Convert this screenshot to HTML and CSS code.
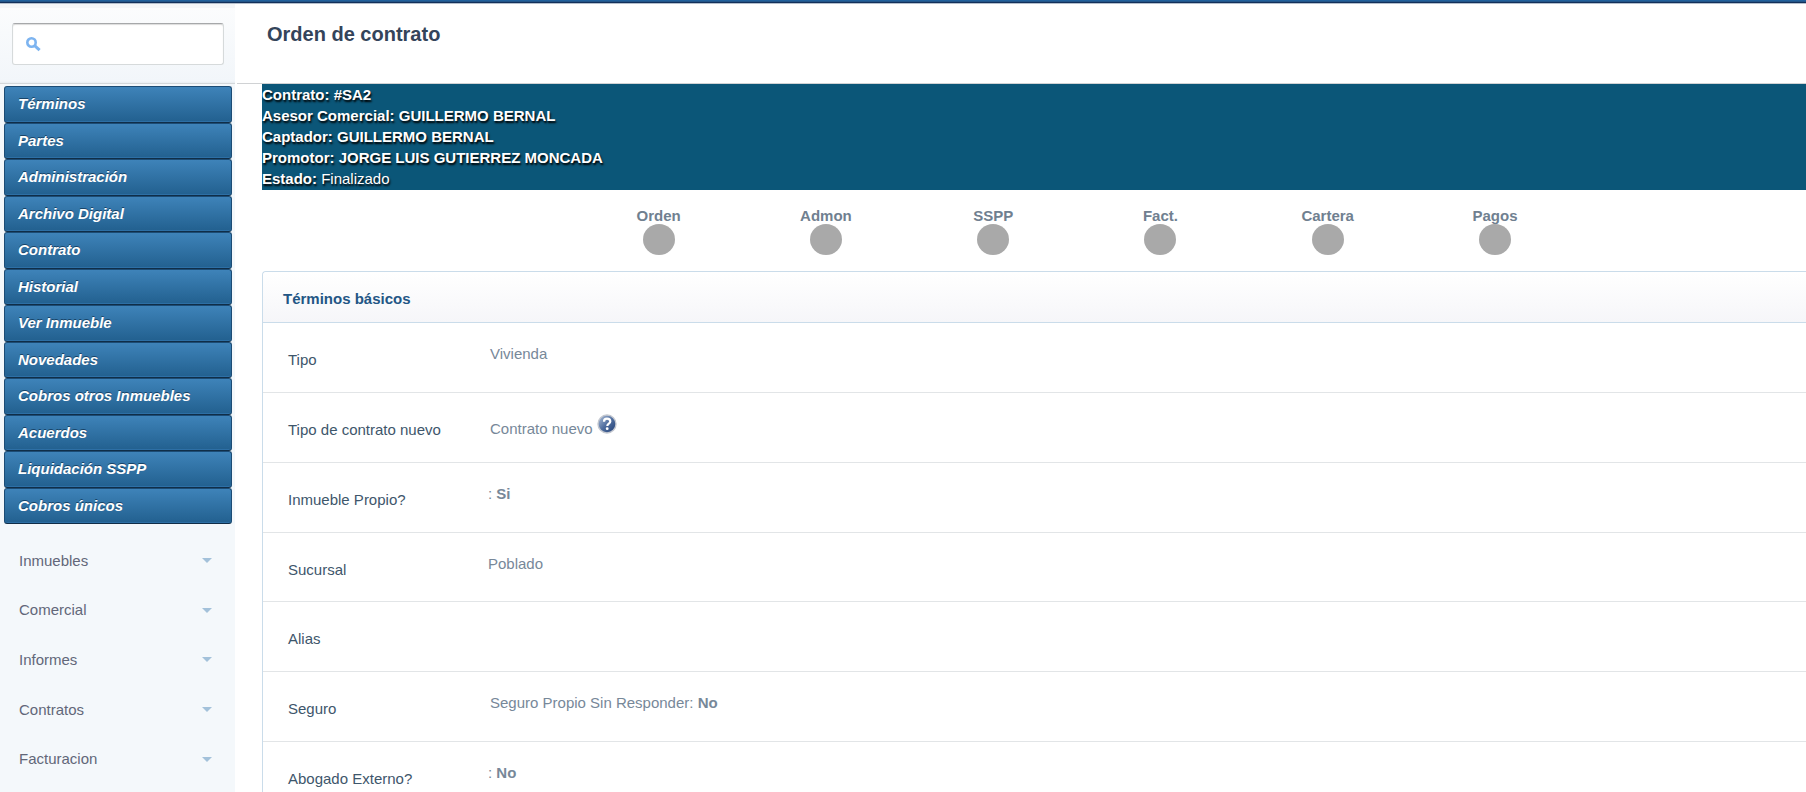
FILE: index.html
```html
<!DOCTYPE html>
<html lang="es">
<head>
<meta charset="utf-8">
<meta name="viewport" content="width=device-width, initial-scale=1">
<title>Orden de contrato</title>
<link rel="stylesheet" href="styles.css">
</head>
<body>
<div class="topbar"></div>
<div class="layout">
  <aside class="sidebar">
    <form class="search" role="search">
      <label class="search-box">
        <svg class="search-icon" viewBox="0 0 16 16" aria-hidden="true"><circle cx="6.5" cy="6.5" r="4.2" fill="none" stroke="#7db4f0" stroke-width="2.6"/><path d="M9.6 9.6l5 4.6" stroke="#7db4f0" stroke-width="3"/></svg>
        <input class="search-input" type="text" aria-label="Buscar">
      </label>
    </form>
    <nav class="tabs" aria-label="Contrato">
      <a class="tab" href="#">Términos</a>
      <a class="tab" href="#">Partes</a>
      <a class="tab" href="#">Administración</a>
      <a class="tab" href="#">Archivo Digital</a>
      <a class="tab" href="#">Contrato</a>
      <a class="tab" href="#">Historial</a>
      <a class="tab" href="#">Ver Inmueble</a>
      <a class="tab" href="#">Novedades</a>
      <a class="tab" href="#">Cobros otros Inmuebles</a>
      <a class="tab" href="#">Acuerdos</a>
      <a class="tab" href="#">Liquidación SSPP</a>
      <a class="tab" href="#">Cobros únicos</a>
    </nav>
    <nav class="menu" aria-label="Principal">
      <a class="menu-item" href="#">Inmuebles<span class="caret"></span></a>
      <a class="menu-item" href="#">Comercial<span class="caret"></span></a>
      <a class="menu-item" href="#">Informes<span class="caret"></span></a>
      <a class="menu-item" href="#">Contratos<span class="caret"></span></a>
      <a class="menu-item" href="#">Facturacion<span class="caret"></span></a>
    </nav>
  </aside>
  <main class="main">
    <header class="page-header"><h1 class="page-title">Orden de contrato</h1></header>
    <div class="content">
      <section class="banner">
        <div><b>Contrato: #SA2</b></div>
        <div><b>Asesor Comercial: GUILLERMO BERNAL</b></div>
        <div><b>Captador: GUILLERMO BERNAL</b></div>
        <div><b>Promotor: JORGE LUIS GUTIERREZ MONCADA</b></div>
        <div><b>Estado:</b> Finalizado</div>
      </section>
      <div class="steps">
        <div class="step">Orden<span class="dot"></span></div>
        <div class="step">Admon<span class="dot"></span></div>
        <div class="step">SSPP<span class="dot"></span></div>
        <div class="step">Fact.<span class="dot"></span></div>
        <div class="step">Cartera<span class="dot"></span></div>
        <div class="step">Pagos<span class="dot"></span></div>
      </div>
      <section class="panel">
        <h2 class="panel-title">Términos básicos</h2>
        <dl class="fields">
          <div class="field"><dt>Tipo</dt><dd class="inset">Vivienda</dd></div>
          <div class="field"><dt>Tipo de contrato nuevo</dt><dd class="inset">Contrato nuevo
            <svg class="help" viewBox="0 0 20 20" role="img" aria-label="Ayuda"><defs><linearGradient id="ball" x1="0" y1="0" x2="1" y2="1"><stop offset="0" stop-color="#b4c4dc"/><stop offset=".5" stop-color="#506e9f"/><stop offset="1" stop-color="#203e74"/></linearGradient></defs><circle cx="10" cy="10" r="9" fill="url(#ball)" stroke="#c3c7cf" stroke-width="1.4"/><path d="M7 7.8C7 5.6 8.2 4.7 10 4.7s3.3 1 3.3 2.8c0 2-3 2.2-3 4.4" fill="none" stroke="#fff" stroke-width="2.2"/><circle cx="10.2" cy="14.7" r="1.4" fill="#fff"/></svg></dd></div>
          <div class="field"><dt>Inmueble Propio?</dt><dd>: <b>Si</b></dd></div>
          <div class="field"><dt>Sucursal</dt><dd>Poblado</dd></div>
          <div class="field"><dt>Alias</dt><dd></dd></div>
          <div class="field"><dt>Seguro</dt><dd class="inset">Seguro Propio Sin Responder: <b>No</b></dd></div>
          <div class="field"><dt>Abogado Externo?</dt><dd>: <b>No</b></dd></div>
        </dl>
      </section>
    </div>
  </main>
</div>
</body>
</html>
```

FILE: styles.css
```css
* { box-sizing: border-box; }

body {
  margin: 0;
  height: 100vh;
  overflow: hidden;
  background: #fff;
  color: #778899;
  font: 15px/20px "Liberation Sans", Arial, sans-serif;
}

a { text-decoration: none; }

.topbar {
  height: 4px;
  background: linear-gradient(#20609c 0 1px, #225588 1px 2px, #12305a 2px 3px, #b4bfcc 3px);
}

.layout {
  display: flex;
  gap: 2px;
  height: 100%;
}

.sidebar {
  flex: 0 0 235px;
  min-width: 0;
  background: #f4f8fb;
}

.search {
  height: 80px;
  padding: 19px 11px 18px 12px;
  border-bottom: 1px solid #d3d7da;
  background: linear-gradient(#f4f6f8 0 4px, #fbfcfd 4px, #f2f6fa 77px, #e8edf1);
}

.search-box {
  display: flex;
  align-items: center;
  height: 42px;
  padding-left: 12px;
  border: 1px solid #d6dadb;
  border-top-color: #a6a8aa;
  border-radius: 3px;
  background: #fff;
  box-shadow: inset 0 1px 1px #dcdcdc;
}

.search-icon {
  flex: none;
  width: 16px;
  height: 16px;
}

.search-input {
  flex: 1;
  width: 100%;
  min-width: 0;
  height: 32px;
  padding: 0 8px;
  border: 0;
  outline: 0;
  background: transparent;
  font: inherit;
}

.tabs {
  display: grid;
  grid-auto-rows: 1fr;
  height: 438px;
  margin: 2px 3px 0 4px;
}

.tab {
  display: flex;
  align-items: center;
  padding: 0 13px;
  border: 1px solid #1c4c75;
  border-bottom-color: #102e48;
  border-radius: 3px;
  background: linear-gradient(#3e83b9, #22608f);
  box-shadow: inset 0 -1px 0 #2d6fa5;
  color: #fff;
  font-style: italic;
  font-weight: bold;
  text-shadow: 0 -1px 0 #184468;
}

.menu {
  display: grid;
  grid-auto-rows: 1fr;
  height: 248px;
  margin-top: 12px;
}

.menu-item {
  display: flex;
  align-items: center;
  justify-content: space-between;
  padding: 0 23px 0 19px;
  color: #626779;
}

.caret {
  border: 5px solid transparent;
  border-top-color: #a3c1da;
  border-bottom: 0;
}

.main {
  flex: 1;
  min-width: 0;
}

.page-header {
  height: 80px;
  padding: 18px 30px;
  border-bottom: 1px solid #d0d2d4;
}

.page-title {
  margin: 0;
  color: #34445a;
  font-size: 20px;
  line-height: 24px;
}

.content { padding-left: 25px; }

.banner {
  display: grid;
  grid-auto-rows: 1fr;
  height: 106px;
  padding-top: 1px;
  background: #0b5678;
  color: #fff;
  text-shadow: 1px 2px 2px #000;
}

.steps {
  display: grid;
  grid-template-columns: repeat(6, 1fr);
  width: 65%;
  margin: 18px 0 16px 313px;
  font-weight: bold;
}

.step {
  display: flex;
  flex-direction: column;
  align-items: center;
  line-height: 16px;
  color: #708090;
}

.dot {
  width: 32px;
  height: 31px;
  border-radius: 50%;
  background: #a9a9a9;
}

.panel {
  border: 1px solid #cadcea;
  border-right: 0;
  border-radius: 4px 0 0 0;
}

.panel-title {
  margin: 0;
  padding: 17px 20px 13px;
  border-bottom: 1px solid #cadcea;
  background: linear-gradient(#fff, #f6f6f9);
  border-radius: 4px 0 0 0;
  color: #235685;
  font-size: 15px;
  line-height: 20px;
}

.fields {
  display: grid;
  grid-auto-rows: 1fr;
  height: 489px;
  margin: 0;
}

.field {
  display: grid;
  grid-template-columns: 200px 1fr;
  padding-left: 25px;
  border-bottom: 1px solid #e2e5e7;
}

.field dt {
  padding-top: 27px;
  color: #3e566b;
}

.field dd {
  margin: 0;
  padding-top: 21px;
}

.field .inset { padding-left: 2px; }

.help {
  width: 20px;
  height: 20px;
}
```
